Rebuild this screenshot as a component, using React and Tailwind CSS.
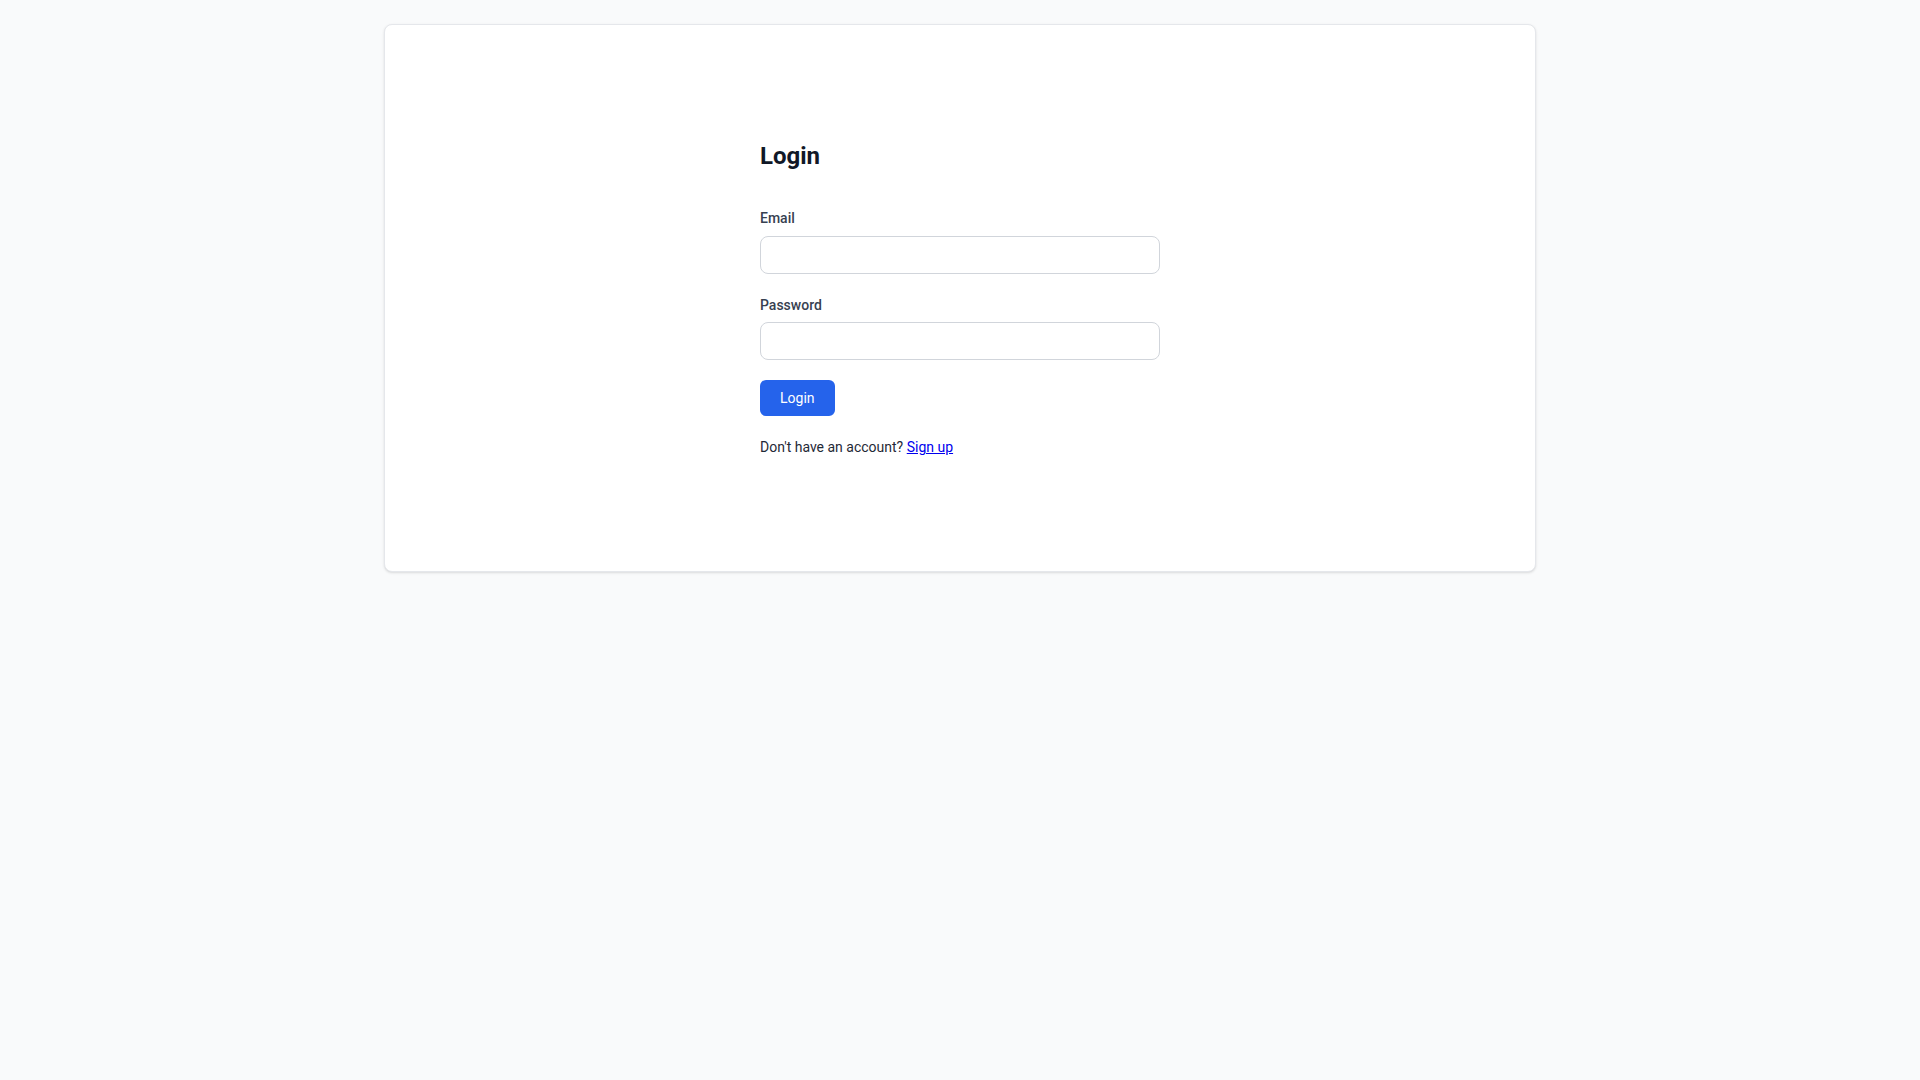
export default function App() {
  return (
    <div className="min-h-screen bg-[#f9fafb] font-['Roboto',sans-serif] pt-6">
      <div className="mx-auto max-w-6xl rounded-lg border border-[#e5e7eb] bg-white shadow-sm">
        <div className="mx-auto w-[400px] pt-[115px] pb-[114px]">
          <h1 className="mb-9 text-2xl font-bold text-[#111827]">Login</h1>

          <form onSubmit={(e) => e.preventDefault()}>
            <div className="mb-[21px]">
              <label htmlFor="email" className="mb-2 block text-sm font-medium text-[#374151]">
                Email
              </label>
              <input
                id="email"
                type="email"
                className="block h-[38px] w-full rounded-lg border border-[#d1d5db] px-3 text-sm outline-none"
              />
            </div>

            <div className="mb-5">
              <label htmlFor="password" className="mb-[7px] block text-sm font-medium text-[#374151]">
                Password
              </label>
              <input
                id="password"
                type="password"
                className="block h-[38px] w-full rounded-lg border border-[#d1d5db] px-3 text-sm outline-none"
              />
            </div>

            <button
              type="submit"
              className="rounded-md bg-[#2563eb] px-5 py-2 text-sm text-white hover:bg-[#1d4ed8]"
            >
              Login
            </button>
          </form>

          <p className="mt-[21px] text-sm text-[#1f2937]">
            Don't have an account?{" "}
            <a href="#" className="text-[#0000ee] underline">
              Sign up
            </a>
          </p>
        </div>
      </div>
    </div>
  );
}
